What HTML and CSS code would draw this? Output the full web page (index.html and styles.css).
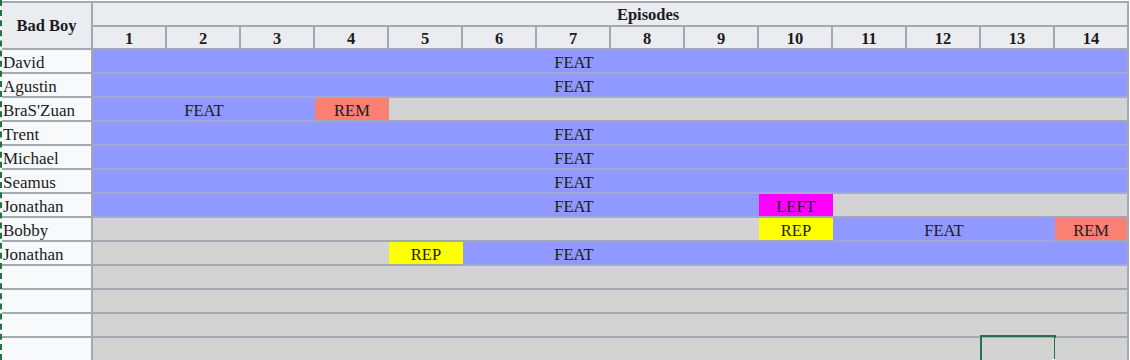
FILE: index.html
```html
<!DOCTYPE html>
<html lang="en">
<head>
    <title>Bad Boy - Episodes</title>
    <link rel="stylesheet" href="styles.css">
</head>
<body>
    <div class="sheet">
        <table class="progress">
            <colgroup>
                <col class="name-col">
                <col span="14" class="ep-col">
            </colgroup>
            <thead>
                <tr>
                    <th rowspan="2" class="corner">Bad Boy</th>
                    <th colspan="14" class="episodes">Episodes</th>
                </tr>
                <tr id="episodeRow"></tr>
            </thead>
            <tbody id="tableBody"></tbody>
        </table>
    </div>

    <script>
        // B = featured, G = out, R = removed, Y = replacement, L = left
        const rows = [
            { name: "David",     cells: "BBBBBBBBBBBBBB", labels: { 7: "FEAT" } },
            { name: "Agustin",   cells: "BBBBBBBBBBBBBB", labels: { 7: "FEAT" } },
            { name: "BraS'Zuan", cells: "BBBRGGGGGGGGGG", labels: { 2: "FEAT", 4: "REM" } },
            { name: "Trent",     cells: "BBBBBBBBBBBBBB", labels: { 7: "FEAT" } },
            { name: "Michael",   cells: "BBBBBBBBBBBBBB", labels: { 7: "FEAT" } },
            { name: "Seamus",    cells: "BBBBBBBBBBBBBB", labels: { 7: "FEAT" } },
            { name: "Jonathan",  cells: "BBBBBBBBBLGGGG", labels: { 7: "FEAT", 10: "LEFT" } },
            { name: "Bobby",     cells: "GGGGGGGGGYBBBR", labels: { 10: "REP", 12: "FEAT", 14: "REM" } },
            { name: "Jonathan",  cells: "GGGGYBBBBBBBBB", labels: { 5: "REP", 7: "FEAT" } },
            { name: "",          cells: "GGGGGGGGGGGGGG", labels: {} },
            { name: "",          cells: "GGGGGGGGGGGGGG", labels: {} },
            { name: "",          cells: "GGGGGGGGGGGGGG", labels: {} },
            { name: "",          cells: "GGGGGGGGGGGGGG", labels: {}, selected: 13 }
        ];

        const classes = { B: "feat", G: "out", R: "rem", Y: "rep", L: "left" };

        const episodeRow = document.getElementById("episodeRow");
        for (let i = 1; i <= 14; i++) {
            episodeRow.innerHTML += `<th>${i}</th>`;
        }

        const tableBody = document.getElementById("tableBody");
        rows.forEach(row => {
            let html = `<td class="name">${row.name}</td>`;
            [...row.cells].forEach((code, i) => {
                const ep = i + 1;
                const label = row.labels[ep] || "";
                const mark = row.selected === ep ? `<div class="cursor"><span class="handle"></span></div>` : "";
                html += `<td class="${classes[code]}">${label}${mark}</td>`;
            });
            tableBody.innerHTML += `<tr>${html}</tr>`;
        });
    </script>
</body>
</html>
```

FILE: styles.css
```css
* {
    box-sizing: border-box;
    margin: 0;
    padding: 0;
}

body {
    background: #fff;
    font-family: "Liberation Serif", "Times New Roman", serif;
    color: #1b1b22;
    overflow: hidden;
}

.sheet {
    border-left: 2px dashed #217346;
    padding-top: 1px;
    height: 360px;
}

.progress {
    table-layout: fixed;
    border-collapse: separate;
    border-spacing: 0;
    width: 1127px;
    border-top: 2px solid #a2a9b1;
}

.name-col { width: 91px; }
.ep-col { width: 74px; }

th {
    background: #eaecf0;
    font-size: 16.5px;
    font-weight: bold;
    border-right: 2px solid #a2a9b1;
    border-bottom: 2px solid #a2a9b1;
    text-align: center;
    vertical-align: middle;
    height: 24px;
    line-height: 20px;
}

th.episodes {
    padding-left: 76px;
    padding-top: 1px;
}

thead tr:last-child th {
    height: 23px;
    line-height: 18px;
    padding-top: 3px;
}

td {
    font-size: 16.5px;
    text-align: center;
    vertical-align: middle;
    height: 24px;
    line-height: 18px;
    padding-top: 3px;
    border-bottom: 2px solid #a2a9b1;
    white-space: nowrap;
    position: relative;
}

td:last-child {
    border-right: 2px solid #a2a9b1;
}

td.name {
    background: #f8f9fa;
    font-size: 17px;
    text-align: left;
    padding-left: 1px;
    border-right: 2px solid #a2a9b1;
}

.feat { background: #8f99ff; border-bottom-color: #a3a8dc; }
.out { background: #d3d3d3; }
.rem { background: #fa8072; }
.rep { background: #ffff00; }
.left { background: #ff00ff; }

/* active cell outline */
.cursor {
    position: absolute;
    left: -1px;
    top: -3px;
    right: -1px;
    bottom: -3px;
    border: 2px solid #217346;
}

.handle {
    position: absolute;
    right: -4px;
    bottom: -4px;
    width: 6px;
    height: 6px;
    background: #217346;
    border: 1px solid #fff;
}
```
